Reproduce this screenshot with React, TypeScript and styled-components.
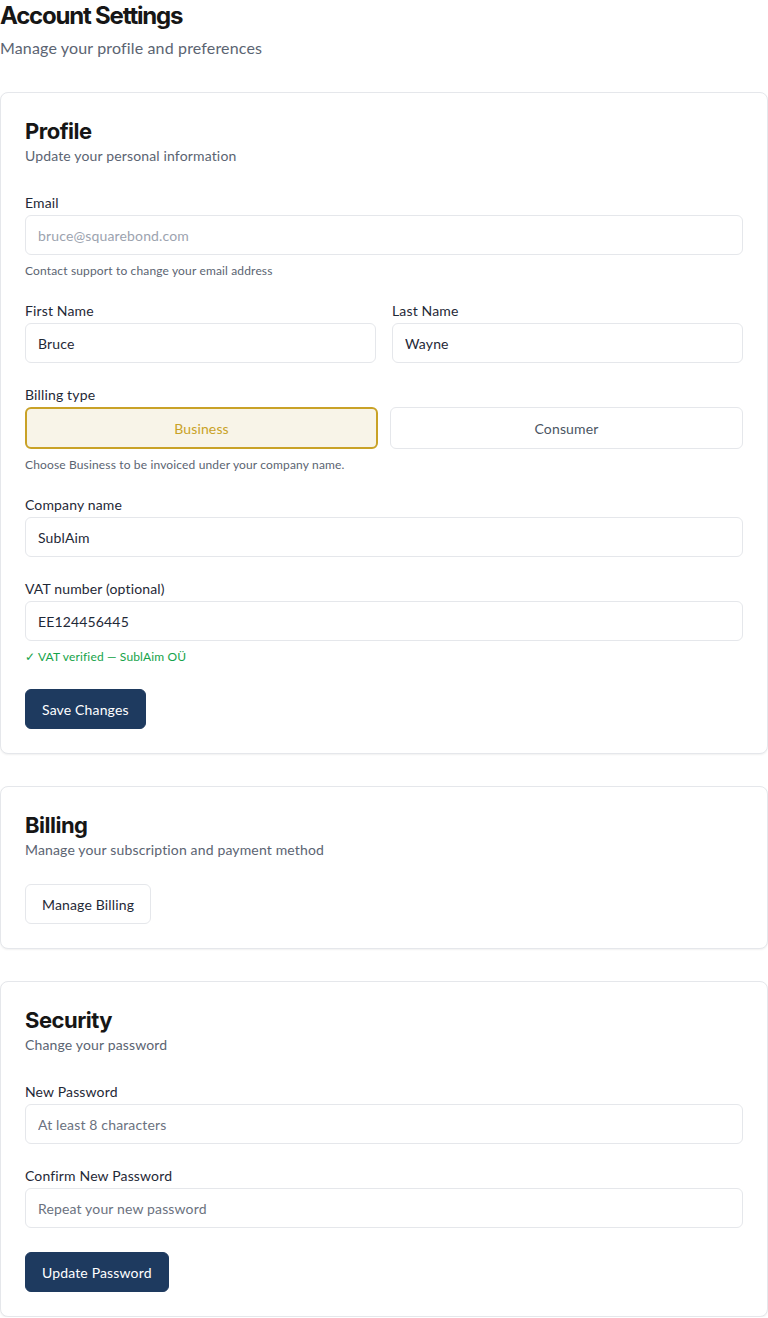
import React from 'react';
import styled, { createGlobalStyle } from 'styled-components';

const GlobalStyle = createGlobalStyle`
  * { box-sizing: border-box; }
  body {
    margin: 0;
    background: #ffffff;
    font-family: Lato, "Noto Sans", sans-serif;
    letter-spacing: 0.15px;
    color: #1f2937;
  }
`;

const Page = styled.div`
  width: 768px;
`;

const PageHeader = styled.header`
  margin-bottom: 32px;
`;

const PageTitle = styled.h1`
  margin: 0;
  font-family: Inter, sans-serif;
  font-size: 24px;
  line-height: 32px;
  font-weight: 700;
  letter-spacing: -1.2px;
  color: #161616;
`;

const PageSubtitle = styled.p`
  margin: 4px 0 0;
  font-size: 16px;
  line-height: 24px;
  color: #5b6472;
`;

const Stack = styled.div`
  display: flex;
  flex-direction: column;
  gap: 32px;
`;

const Card = styled.section`
  background: #ffffff;
  border: 1px solid #e5e7eb;
  border-radius: 8px;
  box-shadow: 0 1px 2px rgba(0, 0, 0, 0.06);
  padding: 24px;
`;

const CardHeader = styled.div`
  margin-bottom: 24px;
`;

const CardTitle = styled.h2`
  margin: 0;
  font-family: Inter, sans-serif;
  font-size: 22px;
  line-height: 28px;
  font-weight: 700;
  letter-spacing: -0.5px;
  color: #161616;
`;

const CardSubtitle = styled.p`
  margin: 1px 0 0;
  font-size: 14px;
  line-height: 20px;
  color: #5b6472;
`;

const Form = styled.div`
  display: flex;
  flex-direction: column;
  gap: 22px;
  padding-top: 3px;
`;

const Row = styled.div`
  display: grid;
  grid-template-columns: 1fr 1fr;
  gap: 16px;
`;

const Field = styled.div`
  display: flex;
  flex-direction: column;
`;

const Label = styled.label`
  font-size: 14px;
  line-height: 20px;
  color: #1f2937;
  margin-bottom: 2px;
`;

const Input = styled.input<{ $muted?: boolean }>`
  height: 40px;
  width: 100%;
  padding: 0 12px;
  border: 1px solid #e5e7eb;
  border-radius: 6px;
  background: #ffffff;
  font-family: inherit;
  font-size: 14px;
  letter-spacing: 0.15px;
  color: ${({ $muted }) => ($muted ? '#9ca3af' : '#1f2937')};
  outline: none;

  &::placeholder {
    color: #6b7280;
  }
`;

const Hint = styled.p<{ $success?: boolean }>`
  margin: 8px 0 0;
  font-size: 12px;
  line-height: 16px;
  color: ${({ $success }) => ($success ? '#16a34a' : '#5b6472')};
`;

const ToggleGroup = styled.div`
  display: grid;
  grid-template-columns: 1fr 1fr;
  gap: 12px;
`;

const ToggleButton = styled.button<{ $active?: boolean }>`
  height: 42px;
  border-radius: 6px;
  font-family: inherit;
  font-size: 14px;
  letter-spacing: 0.15px;
  cursor: pointer;
  border: ${({ $active }) => ($active ? '2px solid #c9a227' : '1px solid #e5e7eb')};
  background: ${({ $active }) => ($active ? '#f8f4e8' : '#ffffff')};
  color: ${({ $active }) => ($active ? '#c9a227' : '#4b5563')};
`;

const Actions = styled.div`
  margin-top: 2px;
`;

const Button = styled.button<{ $variant?: 'primary' | 'outline' }>`
  height: 40px;
  padding: 0 16px;
  border-radius: 6px;
  font-family: inherit;
  font-size: 14px;
  letter-spacing: 0.15px;
  cursor: pointer;
  border: 1px solid ${({ $variant }) => ($variant === 'outline' ? '#e5e7eb' : '#1e3a5f')};
  background: ${({ $variant }) => ($variant === 'outline' ? '#ffffff' : '#1e3a5f')};
  color: ${({ $variant }) => ($variant === 'outline' ? '#1f2937' : '#ffffff')};
`;

export default function App() {
  return (
    <Page>
      <GlobalStyle />
      <PageHeader>
        <PageTitle>Account Settings</PageTitle>
        <PageSubtitle>Manage your profile and preferences</PageSubtitle>
      </PageHeader>

      <Stack>
        <Card>
          <CardHeader>
            <CardTitle>Profile</CardTitle>
            <CardSubtitle>Update your personal information</CardSubtitle>
          </CardHeader>
          <Form>
            <Field>
              <Label>Email</Label>
              <Input $muted readOnly value="bruce@squarebond.com" />
              <Hint>Contact support to change your email address</Hint>
            </Field>
            <Row>
              <Field>
                <Label>First Name</Label>
                <Input readOnly value="Bruce" />
              </Field>
              <Field>
                <Label>Last Name</Label>
                <Input readOnly value="Wayne" />
              </Field>
            </Row>
            <Field>
              <Label>Billing type</Label>
              <ToggleGroup>
                <ToggleButton $active>Business</ToggleButton>
                <ToggleButton>Consumer</ToggleButton>
              </ToggleGroup>
              <Hint>Choose Business to be invoiced under your company name.</Hint>
            </Field>
            <Field>
              <Label>Company name</Label>
              <Input readOnly value="SublAim" />
            </Field>
            <Field>
              <Label>VAT number (optional)</Label>
              <Input readOnly value="EE124456445" />
              <Hint $success>✓ VAT verified — SublAim OÜ</Hint>
            </Field>
            <Actions>
              <Button>Save Changes</Button>
            </Actions>
          </Form>
        </Card>

        <Card>
          <CardHeader>
            <CardTitle>Billing</CardTitle>
            <CardSubtitle>Manage your subscription and payment method</CardSubtitle>
          </CardHeader>
          <Actions>
            <Button $variant="outline">Manage Billing</Button>
          </Actions>
        </Card>

        <Card>
          <CardHeader>
            <CardTitle>Security</CardTitle>
            <CardSubtitle>Change your password</CardSubtitle>
          </CardHeader>
          <Form>
            <Field>
              <Label>New Password</Label>
              <Input type="password" placeholder="At least 8 characters" />
            </Field>
            <Field>
              <Label>Confirm New Password</Label>
              <Input type="password" placeholder="Repeat your new password" />
            </Field>
            <Actions>
              <Button>Update Password</Button>
            </Actions>
          </Form>
        </Card>
      </Stack>
    </Page>
  );
}
